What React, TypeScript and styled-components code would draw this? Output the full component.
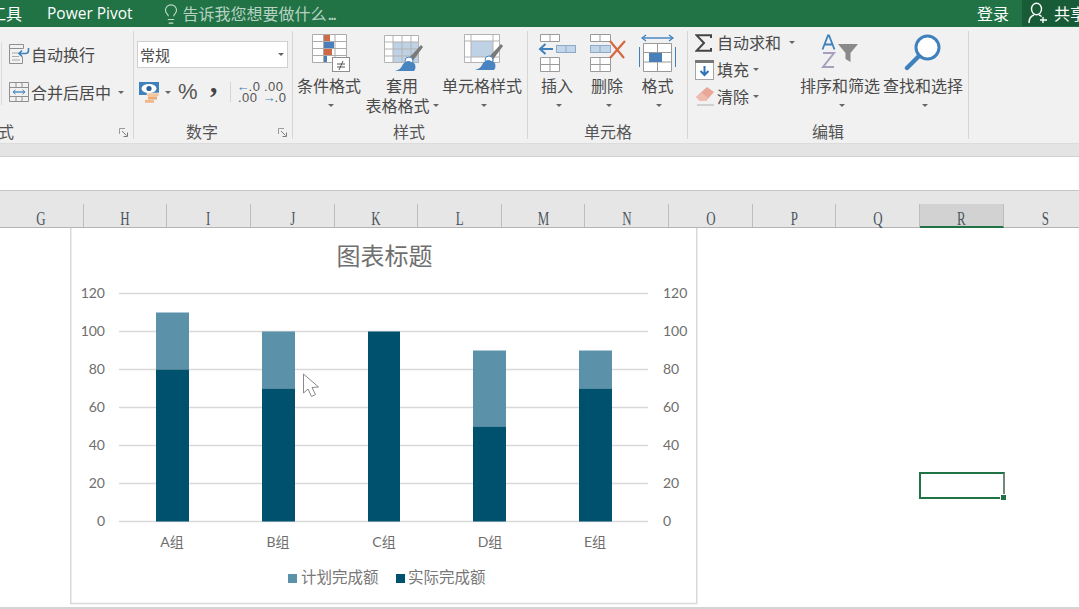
import React from "react";
import styled, { createGlobalStyle } from "styled-components";
import { Lightbulb } from "lucide-react";

const CJK = `"Noto Sans CJK SC", "Noto Sans", sans-serif`;

const Global = createGlobalStyle`
  html, body { margin: 0; padding: 0; background: #fff; overflow: hidden; }
  body { font-family: ${CJK}; }
`;

const Page = styled.div`
  width: 1079px;
  height: 609px;
  overflow: hidden;
  display: flex;
  flex-direction: column;
  background: #fff;
`;

/* ---------- title bar ---------- */
const TitleBar = styled.header`
  height: 27px;
  flex: none;
  background: #217346;
  display: flex;
  align-items: center;
  color: #fff;
  font-size: 16px;
  white-space: nowrap;
`;
const Tab = styled.span`
  margin-left: -10px;
  line-height: 23px;
`;
const PivotTab = styled.span`
  margin-left: 25px;
  font-family: "Open Sans", sans-serif;
  font-size: 15.5px;
  line-height: 23px;
`;
const Hint = styled.div`
  display: flex;
  align-items: center;
  gap: 1px;
  margin-left: 27px;
  color: #b7d2c2;
  flex: 1;
  line-height: 23px;
`;
const HintDots = styled.span`
  letter-spacing: -2px;
`;
const SignIn = styled.span`
  margin-right: 13px;
  line-height: 23px;
`;
const Share = styled.div`
  width: 57px;
  height: 26px;
  align-self: flex-start;
  flex: none;
  background: #185c37;
  display: flex;
  align-items: center;
  gap: 6px;
  padding-left: 6px;
  box-sizing: border-box;
  overflow: hidden;
  & > svg { flex: none; }
  & > span { flex: none; }
`;

/* ---------- ribbon ---------- */
const Ribbon = styled.section`
  height: 116px;
  flex: none;
  box-sizing: border-box;
  padding-top: 4px;
  background: #f1f1f1;
  display: flex;
  color: #4a4a4a;
  font-size: 16px;
`;
const Group = styled.div<{ $w: number }>`
  width: ${(p) => p.$w}px;
  height: 108px;
  flex: none;
  box-sizing: border-box;
  border-right: 1px solid #d6d6d6;
  display: flex;
  flex-direction: column;
`;
const GroupBody = styled.div`
  height: 92px;
  flex: none;
  display: flex;
`;
const GroupFooter = styled.div<{ $pad: number }>`
  height: 16px;
  padding-left: ${(p) => p.$pad}px;
  padding-right: 5px;
  display: flex;
  align-items: center;
  justify-content: space-between;
  font-size: 16px;
  color: #555;
  line-height: 16px;
`;
const ClippedLabel = styled.span`
  margin-left: -2px;
`;
const Launcher = styled.svg`
  width: 9px;
  height: 9px;
  margin-top: 3px;
`;
const Caret = styled.i<{ $gap?: number }>`
  display: inline-block;
  width: 0;
  height: 0;
  border-left: 3.5px solid transparent;
  border-right: 3.5px solid transparent;
  border-top: 3.5px solid #666;
  margin-left: ${(p) => p.$gap ?? 0}px;
  flex: none;
`;
const VRule = styled.div`
  width: 1px;
  height: 63px;
  margin: 11px 0 0 1px;
  background: #dcdcdc;
  flex: none;
`;
const AlignStack = styled.div`
  padding: 4px 0 0 6px;
  display: flex;
  flex-direction: column;
`;
const AlignRow = styled.div`
  height: 38px;
  display: flex;
  align-items: center;
  gap: 1px;
  white-space: nowrap;
  line-height: 21px;
`;
const NumberColumn = styled.div`
  padding-left: 3px;
  display: flex;
  flex-direction: column;
`;
const Combo = styled.div`
  width: 151px;
  height: 27px;
  margin-top: 10px;
  box-sizing: border-box;
  background: #fff;
  border: 1px solid #d0d0d0;
  padding: 0 3px 0 2px;
  display: flex;
  align-items: center;
  justify-content: space-between;
  font-size: 15px;
`;
const NumberTools = styled.div`
  height: 24px;
  margin-top: 12px;
  padding-left: 2px;
  display: flex;
  align-items: center;
`;
const Percent = styled.span`
  font-family: "Liberation Sans", sans-serif;
  font-size: 22px;
  line-height: 24px;
  margin-left: 7px;
  color: #555;
`;
const Comma = styled.span`
  font-family: "Liberation Serif", serif;
  font-weight: 700;
  font-size: 30px;
  line-height: 34px;
  height: 24px;
  margin-left: 11px;
  color: #444;
`;
const ToolRule = styled.div`
  width: 1px;
  height: 20px;
  background: #d6d6d6;
  margin: 0 6px 0 11px;
`;
const Decimal = styled.div`
  width: 21px;
  font-family: "Liberation Sans", sans-serif;
  font-size: 13px;
  line-height: 11px;
  letter-spacing: 0.5px;
  text-align: right;
  color: #555;
  white-space: nowrap;
  & + & { margin-left: 5px; }
`;
const Arrow = styled.b`
  color: #3f81bd;
  font-weight: 700;
  letter-spacing: -1px;
`;
const Big = styled.div<{ $w: number }>`
  width: ${(p) => p.$w}px;
  flex: none;
  padding-top: 3px;
  display: flex;
  flex-direction: column;
  align-items: center;
  white-space: nowrap;
`;
const BigIcon = styled.div<{ $shift?: number }>`
  height: 38px;
  margin-bottom: 3px;
  margin-left: ${(p) => p.$shift ?? 0}px;
  display: flex;
  align-items: flex-start;
  justify-content: center;
`;
const BigLine = styled.div`
  height: 20px;
  line-height: 20px;
  display: flex;
  align-items: center;
`;
const CellsBody = styled(GroupBody)`
  padding-left: 4px;
`;
const EditStack = styled.div`
  width: 105px;
  margin: -2px 0 0 7px;
  flex: none;
  display: flex;
  flex-direction: column;
`;
const EditRow = styled.div`
  height: 27px;
  display: flex;
  align-items: center;
  white-space: nowrap;
  line-height: 25px;
`;
const EditIcon = styled.span`
  width: 22px;
  flex: none;
  display: flex;
`;

const GrayStrip = styled.div`
  height: 14px;
  flex: none;
  background: #e4e4e4;
  border-top: 1px solid #dcdcdc;
  border-bottom: 1px solid #d0d0d0;
  box-sizing: border-box;
`;
const FormulaBar = styled.div`
  height: 33px;
  flex: none;
  background: #fff;
`;
const HeaderPad = styled.div`
  height: 14px;
  flex: none;
  background: #e6e6e6;
  border-top: 1px solid #c6c6c6;
  box-sizing: border-box;
`;
const Columns = styled.div`
  height: 24px;
  flex: none;
  background: #e6e6e6;
  border-bottom: 1px solid #b4b4b4;
  box-sizing: border-box;
  display: flex;
`;
const Col = styled.div<{ $active?: boolean }>`
  width: 83.65px;
  flex: none;
  box-sizing: border-box;
  text-align: center;
  line-height: 28px;
  height: ${(p) => (p.$active ? "24px" : "23px")};
  border-right: 1px solid #bdbdbd;
  background: ${(p) => (p.$active ? "#d2d2d2" : "transparent")};
  border-bottom: ${(p) => (p.$active ? "2px solid #217346" : "none")};
`;
const ColLetter = styled.span`
  display: inline-block;
  font-family: "Liberation Serif", serif;
  font-size: 19px;
  color: #4a5560;
  transform: scaleX(0.68);
`;
const Sheet = styled.div`
  position: relative;
  flex: 1;
  background: #fff;
  border-bottom: 2px solid #d4d4d4;
`;
const ChartSvg = styled.svg`
  position: absolute;
  left: 70px;
  top: 0;
  display: block;
`;
const ChartTitle = styled.text`
  font-family: ${CJK};
  font-size: 24px;
  fill: #6f6f6f;
  text-anchor: middle;
`;
const AxisText = styled.text`
  font-family: Lato, sans-serif;
  font-size: 14px;
  fill: #6e6e6e;
`;
const CatText = styled.text`
  font-family: Lato, ${CJK};
  font-size: 14px;
  fill: #6e6e6e;
  text-anchor: middle;
`;
const LegendText = styled.text`
  font-family: ${CJK};
  font-size: 15.5px;
  fill: #777;
`;
const Selection = styled.div`
  position: absolute;
  left: 919px;
  top: 244px;
  width: 86px;
  height: 27px;
  box-sizing: border-box;
  border: 2px solid #217346;
  border-right-color: #6f8a7b;
`;
const Handle = styled.div`
  position: absolute;
  right: -3px;
  bottom: -3px;
  width: 5px;
  height: 5px;
  background: #217346;
  border-left: 1px solid #fff;
  border-top: 1px solid #fff;
`;

/* ---------- drawings ---------- */
const LauncherIcon = () => (
  <Launcher viewBox="0 0 9 9" fill="none">
    <path d="M.5 6V.5H6" stroke="#9a9a9a" />
    <path d="M3 3l4.5 4.5M8.5 4.5v4h-4" stroke="#7a7a7a" />
  </Launcher>
);
const WrapIcon = () => (
  <svg width="22" height="22" viewBox="0 0 22 22" fill="none">
    <path d="M1.5 1.5h14v4h-14zM1.5 5.5v15h13v-7" stroke="#8f8f8f" />
    <path d="M4 10h7M4 13.5h7M4 17h8" stroke="#a9a9a9" />
    <path d="M20.5 5v2.5a3 3 0 0 1-3 3h-6M14 7.5l-3 3 3 3" stroke="#3f81bd" strokeWidth="1.6" />
  </svg>
);
const MergeIcon = () => (
  <svg width="22" height="22" viewBox="0 0 22 22" fill="none">
    <path d="M1.5 1.5h19v19h-19zM1.5 6.5h19M1.5 15.5h19M8 1.5v5M14 1.5v5M8 15.5v5M14 15.5v5" stroke="#8f8f8f" />
    <path d="M6 11h10" stroke="#3f81bd" strokeWidth="1.3" />
    <path d="M7.5 8.8L5 11l2.5 2.2M14.5 8.8L17 11l-2.5 2.2" stroke="#3f81bd" />
  </svg>
);
const MoneyIcon = () => (
  <svg width="21" height="21" viewBox="0 0 21 21">
    <rect x="0" y="0" width="20" height="13" fill="#3f81bd" />
    <ellipse cx="10" cy="6.5" rx="7.5" ry="4.5" fill="#fff" />
    <circle cx="10" cy="6.5" r="2.6" fill="#2f5f9a" />
    <rect x="8" y="11" width="12" height="3.4" fill="#f2c79c" stroke="#f1f1f1" strokeWidth=".6" />
    <rect x="9" y="14.5" width="9" height="3" fill="#eeaa73" />
    <rect x="6" y="17.8" width="9" height="3" fill="#f0b98a" />
  </svg>
);
const CondIcon = () => (
  <svg width="38" height="38" viewBox="0 0 38 38" fill="none">
    <path d="M.5.5h34v28H.5z" fill="#fff" />
    <rect x="11" y="0" width="7" height="7" fill="#cf6a48" />
    <rect x="11" y="7.5" width="11" height="7" fill="#4a7fba" />
    <rect x="11" y="15" width="9" height="7" fill="#cf6a48" />
    <rect x="11" y="22" width="4" height="7" fill="#4a7fba" />
    <path d="M.5.5h34v28H.5zM.5 7.5h34M.5 14.5h34M.5 21.5h34M11.5.5v28M23 .5v28" stroke="#ababab" />
    <rect x="20.5" y="23.5" width="17" height="14" fill="#fff" stroke="#8e8e8e" />
    <path d="M25 30h8M25 33h8M31 27l-4 9" stroke="#555" />
  </svg>
);
const TableStyleIcon = () => (
  <svg width="40" height="38" viewBox="0 0 40 38" fill="none">
    <rect x="0.5" y="1.5" width="34" height="27" fill="#fff" />
    <rect x="9" y="8" width="26" height="21" fill="#bed1e5" />
    <path d="M.5 1.5h34v27H.5zM.5 8h34M.5 15h34M.5 22h34M9 1.5v27M18 1.5v27M27 1.5v27" stroke="#b3b3b3" />
    <path d="M39 13l-2-2-13 14 4 3z" fill="#7a7a7a" />
    <circle cx="25" cy="27" r="4" fill="#fff" stroke="#4a84c0" />
    <path d="M25 27c-3 0-6 2-7 5-1 2-3 4-7 5h19c2-2 2-6 0-8z" fill="#4a84c0" />
  </svg>
);
const CellStyleIcon = () => (
  <svg width="40" height="38" viewBox="0 0 40 38" fill="none">
    <rect x=".5" y=".5" width="35" height="28" fill="#fff" />
    <rect x="7" y="7" width="22" height="16" fill="#bed1e5" />
    <path d="M.5.5h35v28H.5zM.5 7h35M.5 23h35M7 .5v28M29 .5v28" stroke="#b3b3b3" />
    <path d="M39 12l-2-2-13 14 4 3z" fill="#7a7a7a" />
    <circle cx="25" cy="26" r="4" fill="#fff" stroke="#4a84c0" />
    <path d="M25 26c-3 0-6 2-7 5-1 2-3 4-7 5h19c2-2 2-6 0-8z" fill="#4a84c0" />
  </svg>
);
const InsertIcon = () => (
  <svg width="38" height="38" viewBox="0 0 38 38" fill="none">
    <path d="M2.5.5h19v7h-19zM12 .5v7M2.5 23.5h19v14h-19zM2.5 30.5h19M12 23.5v14" stroke="#9a9a9a" fill="#fff" />
    <rect x="18.5" y="11.5" width="19" height="7" fill="#c3d5e8" stroke="#8da9c6" />
    <path d="M28 11.5v7" stroke="#8da9c6" />
    <path d="M15 15H3M7.5 10L2 15l5.5 5" stroke="#3f81bd" strokeWidth="2" />
  </svg>
);
const DeleteIcon = () => (
  <svg width="38" height="38" viewBox="0 0 38 38" fill="none">
    <path d="M.5.5h20v7H.5zM10 .5v7M.5 23.5h20v14H.5zM.5 30.5h20M10 23.5v14" stroke="#9a9a9a" fill="#fff" />
    <rect x=".5" y="11.5" width="20" height="7" fill="#c3d5e8" stroke="#8da9c6" />
    <path d="M10 11.5v7" stroke="#8da9c6" />
    <path d="M20 7l14 17M35 7L20 24" stroke="#d5683f" strokeWidth="2.2" />
  </svg>
);
const FormatIcon = () => (
  <svg width="38" height="38" viewBox="0 0 38 38" fill="none">
    <path d="M3 4h31" stroke="#3f81bd" strokeWidth="1.4" />
    <path d="M7 1L3 4l4 3M30 1l4 3-4 3" stroke="#3f81bd" strokeWidth="1.2" />
    <path d="M4.5 9.5h28v28h-28zM4.5 18.5h28M4.5 28h28M18.5 9.5v28" stroke="#9a9a9a" fill="#fff" />
    <rect x="10" y="19" width="13" height="9" fill="#4a7fba" />
    <path d="M.5 13v20M36.5 13v20" stroke="#3f81bd" />
  </svg>
);
const SigmaIcon = () => (
  <svg width="17" height="18" viewBox="0 0 17 18" fill="none">
    <path d="M16 4V1.2H1.5L9 9l-7.5 7.8H16V14" stroke="#444" strokeWidth="2" />
  </svg>
);
const FillIcon = () => (
  <svg width="19" height="20" viewBox="0 0 19 20" fill="none">
    <rect x=".5" y=".5" width="18" height="19" fill="#fff" stroke="#a5a5a5" />
    <rect x="0" y="0" width="19" height="3" fill="#777" />
    <path d="M9.5 6v9M5.5 11l4 4 4-4" stroke="#2f72b5" strokeWidth="2" />
  </svg>
);
const EraserIcon = () => (
  <svg width="20" height="19" viewBox="0 0 20 19" fill="none">
    <path d="M12 0l7 5-8 9H5l-4-4z" fill="#e9a797" />
    <path d="M1 10l4 4h6l2-3-6-5z" fill="#efbdb0" />
    <path d="M2 18h17" stroke="#b0b0b0" />
  </svg>
);
const SortIcon = () => (
  <svg width="38" height="36" viewBox="0 0 38 36" fill="none">
    <path d="M1.5 15.5L7 1.5h1l5.5 14M4 10.5h7" stroke="#3f81bd" strokeWidth="1.8" />
    <path d="M2 19h11L2 33h11" stroke="#a79fbd" strokeWidth="2" />
    <path d="M17 10h20l-7.5 9v9l-5-3v-6z" fill="#8a8a8a" />
  </svg>
);
const FindIcon = () => (
  <svg width="38" height="38" viewBox="0 0 38 38" fill="none">
    <circle cx="23.5" cy="13.5" r="11.5" fill="#fff" stroke="#3f81bd" strokeWidth="3" />
    <path d="M15 22L3 34" stroke="#3f81bd" strokeWidth="4.4" strokeLinecap="round" />
  </svg>
);
const ShareIcon = () => (
  <svg width="20" height="22" viewBox="0 0 20 22" fill="none" stroke="#fff" strokeWidth="1.4">
    <ellipse cx="8.5" cy="7" rx="5" ry="5.8" />
    <path d="M1 21c0-5 2-7 5-8M11 13c1 .3 2 .9 2.6 1.6M15 15v6M12 18h7" />
  </svg>
);

/* ---------- chart ---------- */
const ticks = [0, 20, 40, 60, 80, 100, 120];
const series = [
  { name: "A组", x: 156, w: 33, cx: 172, actual: 80, plan: 110 },
  { name: "B组", x: 262, w: 33, cx: 278, actual: 70, plan: 100 },
  { name: "C组", x: 368, w: 32, cx: 384, actual: 100, plan: 100 },
  { name: "D组", x: 473, w: 33, cx: 490, actual: 50, plan: 90 },
  { name: "E组", x: 579, w: 33, cx: 595, actual: 70, plan: 90 },
];
const y0 = 521.5;
const yOf = (v: number) => y0 - v * 1.9;
const DARK = "#00516d";
const LIGHT = "#5b92aa";

const Chart = () => (
  <ChartSvg width="628" height="377" viewBox="70 228 628 377">
    <rect x="70.75" y="226" width="626" height="377.5" fill="#fff" stroke="#d9d9d9" strokeWidth="1.5" />
    <ChartTitle x="384.5" y="265">图表标题</ChartTitle>
    {ticks.map((t) => (
      <g key={t}>
        <line x1="119" x2="648" y1={yOf(t)} y2={yOf(t)} stroke="#d9d9d9" strokeWidth="1.5" />
        <AxisText x="105" y={yOf(t) + 4.5} textAnchor="end">{t}</AxisText>
        <AxisText x="663" y={yOf(t) + 4.5}>{t}</AxisText>
      </g>
    ))}
    {series.map((s) => (
      <g key={s.name}>
        <rect x={s.x} y={yOf(s.plan)} width={s.w} height={(s.plan - s.actual) * 1.9} fill={LIGHT} />
        <rect x={s.x} y={yOf(s.actual)} width={s.w} height={s.actual * 1.9} fill={DARK} />
        <CatText x={s.cx} y="547">{s.name}</CatText>
      </g>
    ))}
    <rect x="288" y="574" width="9" height="9" fill={LIGHT} />
    <LegendText x="301" y="583">计划完成额</LegendText>
    <rect x="396" y="574" width="9" height="9" fill={DARK} />
    <LegendText x="408" y="583">实际完成额</LegendText>
    <path
      d="M303.5 374v19l4.5-4 3.5 7.5 4-2-3.5-7 6.5-.5z"
      fill="#fff"
      stroke="#8a8a8a"
      strokeWidth="1"
      strokeLinejoin="round"
    />
  </ChartSvg>
);

const columnNames = "GHIJKLMNOPQRS".split("");

export default function App() {
  return (
    <Page>
      <Global />
      <TitleBar>
        <Tab>工具</Tab>
        <PivotTab>Power Pivot</PivotTab>
        <Hint>
          <Lightbulb size={22} strokeWidth={1.2} color="#c6dbcd" />
          告诉我您想要做什么<HintDots>...</HintDots>
        </Hint>
        <SignIn>登录</SignIn>
        <Share>
          <ShareIcon />
          <span>共享</span>
        </Share>
      </TitleBar>

      <Ribbon>
        <Group $w={134}>
          <GroupBody>
            <VRule />
            <AlignStack>
              <AlignRow><WrapIcon />自动换行</AlignRow>
              <AlignRow><MergeIcon />合并后居中<Caret $gap={6} /></AlignRow>
            </AlignStack>
          </GroupBody>
          <GroupFooter $pad={0}><ClippedLabel>式</ClippedLabel><LauncherIcon /></GroupFooter>
        </Group>

        <Group $w={159}>
          <GroupBody>
            <NumberColumn>
              <Combo>常规<Caret /></Combo>
              <NumberTools>
                <MoneyIcon />
                <Caret $gap={5} />
                <Percent>%</Percent>
                <Comma>’</Comma>
                <ToolRule />
                <Decimal><Arrow>←</Arrow>.0<br />.00</Decimal>
                <Decimal>.00<br /><Arrow>→</Arrow>.0</Decimal>
              </NumberTools>
            </NumberColumn>
          </GroupBody>
          <GroupFooter $pad={52}>数字<LauncherIcon /></GroupFooter>
        </Group>

        <Group $w={235}>
          <GroupBody>
            <Big $w={72}>
              <BigIcon $shift={4}><CondIcon /></BigIcon>
              <BigLine>条件格式</BigLine>
              <BigLine><Caret $gap={3} /></BigLine>
            </Big>
            <Big $w={74}>
              <BigIcon $shift={4}><TableStyleIcon /></BigIcon>
              <BigLine>套用</BigLine>
              <BigLine>表格格式<Caret $gap={3} /></BigLine>
            </Big>
            <Big $w={86}>
              <BigIcon $shift={4}><CellStyleIcon /></BigIcon>
              <BigLine>单元格样式</BigLine>
              <BigLine><Caret $gap={3} /></BigLine>
            </Big>
          </GroupBody>
          <GroupFooter $pad={100}>样式</GroupFooter>
        </Group>

        <Group $w={160}>
          <CellsBody>
            <Big $w={50}>
              <BigIcon><InsertIcon /></BigIcon>
              <BigLine>插入</BigLine>
              <BigLine><Caret $gap={3} /></BigLine>
            </Big>
            <Big $w={50}>
              <BigIcon $shift={4}><DeleteIcon /></BigIcon>
              <BigLine>删除</BigLine>
              <BigLine><Caret $gap={3} /></BigLine>
            </Big>
            <Big $w={51}>
              <BigIcon><FormatIcon /></BigIcon>
              <BigLine>格式</BigLine>
              <BigLine><Caret $gap={3} /></BigLine>
            </Big>
          </CellsBody>
          <GroupFooter $pad={56}>单元格</GroupFooter>
        </Group>

        <Group $w={281}>
          <GroupBody>
            <EditStack>
              <EditRow><EditIcon><SigmaIcon /></EditIcon>自动求和<Caret $gap={8} /></EditRow>
              <EditRow><EditIcon><FillIcon /></EditIcon>填充<Caret $gap={4} /></EditRow>
              <EditRow><EditIcon><EraserIcon /></EditIcon>清除<Caret $gap={4} /></EditRow>
            </EditStack>
            <Big $w={80}>
              <BigIcon><SortIcon /></BigIcon>
              <BigLine>排序和筛选</BigLine>
              <BigLine><Caret $gap={3} /></BigLine>
            </Big>
            <Big $w={86}>
              <BigIcon><FindIcon /></BigIcon>
              <BigLine>查找和选择</BigLine>
              <BigLine><Caret $gap={3} /></BigLine>
            </Big>
          </GroupBody>
          <GroupFooter $pad={124}>编辑</GroupFooter>
        </Group>
      </Ribbon>

      <GrayStrip />
      <FormulaBar />
      <HeaderPad />
      <Columns>
        {columnNames.map((c) => (
          <Col key={c} $active={c === "R"}><ColLetter>{c}</ColLetter></Col>
        ))}
      </Columns>
      <Sheet>
        <Chart />
        <Selection><Handle /></Selection>
      </Sheet>
    </Page>
  );
}
